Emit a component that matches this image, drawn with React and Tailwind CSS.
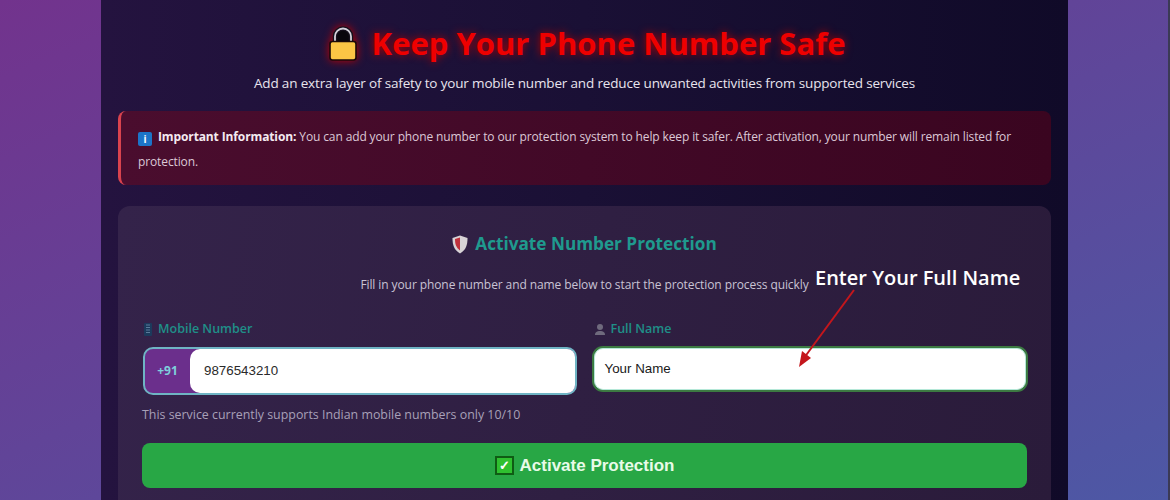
const seg = "font-['Open_Sans','Noto_Sans',sans-serif]";

function Lock() {
  return (
    <svg width="28" height="35" viewBox="0 0 28 35" className="shrink-0 [filter:drop-shadow(0_0_4px_#c00000)]">
      <path d="M6 17V10.500a8 8 0 0 1 16 0V17" fill="#08060c" stroke="#15101c" strokeWidth="4.500" />
      <path d="M6 17V10.500a8 8 0 0 1 16 0V17" fill="none" stroke="#d4d2da" strokeWidth="1.800" />
      <rect x="1" y="15.500" width="26" height="18.500" rx="2.500" fill="#fbc545" stroke="#1a0808" strokeWidth="1.600" />
    </svg>
  );
}

function Shield() {
  return (
    <svg width="16" height="19" viewBox="0 0 16 19" className="shrink-0">
      <path d="M8 .5 15.500 3c0 7-1.500 12-7.500 15.500C2 15 .5 10 .5 3z" fill="#d8d3d6" />
      <path d="M8 2.500 3 4c0 5 1 8.500 5 11.500z" fill="#c0313c" />
    </svg>
  );
}

function Phone() {
  return (
    <svg width="8" height="13" viewBox="0 0 8 13" className="shrink-0">
      <rect width="8" height="13" rx="1" fill="#1c3a5c" />
      <path d="M2 2h4M2 4.500h4M2 7h4M2 9.500h4" stroke="#5b7b9b" strokeWidth="1" />
    </svg>
  );
}

function Person() {
  return (
    <svg width="12" height="13" viewBox="0 0 12 13" className="shrink-0">
      <circle cx="6" cy="4" r="3" fill="#6f6a7d" />
      <path d="M1 12c0-3 2-4 5-4s5 1 5 4z" fill="#6f6a7d" />
    </svg>
  );
}

export default function App() {
  return (
    <div className={`relative h-[500px] w-[1170px] overflow-hidden bg-[linear-gradient(157deg,#72338d_0%,#4d58a5_100%)] ${seg}`}>
      <div className="mx-[101px] h-[500px] w-[967px] bg-[linear-gradient(90deg,#24133f_0%,#1a1035_50%,#100a28_100%)] px-[17px] pt-[22px]">
        <div className="flex h-[42px] items-center justify-center gap-[15px] pl-[5px]">
          <Lock />
          <h1 className="text-[31px] leading-[42px] font-bold text-[#ee0000] [text-shadow:0_0_9px_#b00000]">
            Keep Your Phone Number Safe
          </h1>
        </div>
        <p className="mt-[9px] text-center text-[13.5px] leading-[20px] tracking-[-0.16px] text-[#e8e4ee]">
          Add an extra layer of safety to your mobile number and reduce unwanted activities from supported services
        </p>
        <div className="mt-[18px] h-[74px] rounded-[8px] border-l-[3px] border-[#d9434e] bg-[linear-gradient(90deg,#4a0d2e,#3a0520)] px-[17px] py-[13px] text-[12px] leading-[25px] tracking-[-0.12px] text-[#dcc8d6]">
          <span className="mr-[6px] inline-block h-[14px] w-[14px] rounded-[2px] bg-[#1c74c8] text-center align-[-2px] text-[10px] leading-[14px] font-bold text-white">i</span>
          <strong className="font-bold text-[#f4eaf0]">Important Information:</strong> You can add your phone number to our protection system to help keep it safer. After activation, your number will remain listed for protection.
        </div>
        <div className="mt-[21px] h-[300px] rounded-t-[12px] bg-[linear-gradient(100deg,#34234a,#2a1b3a)] px-[24px] pt-[26px]">
          <div className="flex h-[24px] items-center justify-center gap-[7px]">
            <Shield />
            <h2 className="text-[17.2px] leading-[24px] font-bold text-[#1f9a8e]">Activate Number Protection</h2>
          </div>
          <p className="mt-[19px] text-center text-[12px] leading-[20px] tracking-[-0.09px] text-[#c9c3d4]">
            Fill in your phone number and name below to start the protection process quickly
          </p>
          <div className="mt-[24px] grid grid-cols-2 gap-[16px]">
            <div>
              <label className="flex h-[20px] items-center gap-[6px] pl-[2px] text-[12.5px] font-semibold text-[#1f8f88]">
                <Phone />
                Mobile Number
              </label>
              <div className="mt-[8px] ml-[1px] flex h-[48px] overflow-hidden rounded-[10px] border-2 border-[#6fb4c4] bg-[#6b2f8c]">
                <div className="flex w-[45px] items-center justify-center text-[12px] font-bold text-[#7fd0dc]">+91</div>
                <div className="flex flex-1 items-center rounded-l-[10px] bg-white pl-[14px] font-['Liberation_Sans',sans-serif] text-[13.33px] text-[#2a2a2a]">9876543210</div>
              </div>
            </div>
            <div>
              <label className="flex h-[20px] items-center gap-[5px] pl-[1px] text-[12.5px] font-semibold text-[#1f8f88]">
                <Person />
                Full Name
              </label>
              <div className="mx-[1px] mt-[9px] flex h-[42px] items-center rounded-[9px] border border-[#b5e8d8] bg-white pl-[10px] font-['Liberation_Sans',sans-serif] text-[13.33px] text-[#1a1a1a] shadow-[0_0_0_2px_#3c7a42]">
                Your Name
              </div>
            </div>
          </div>
          <p className="mt-[10px] text-[12.4px] leading-[20px] text-[#a8a0b8]">
            This service currently supports Indian mobile numbers only 10/10
          </p>
          <div className="mt-[18px] flex h-[45px] items-center justify-center gap-[6px] rounded-[8px] bg-[#28a745] font-['Liberation_Sans',sans-serif] text-[17px] font-bold text-[#e8fbe8]">
            <span className="flex h-[19px] w-[19px] items-center justify-center border-2 border-[#0f5c14] bg-[#2fc02f] text-[13px] leading-none text-white">✓</span>
            Activate Protection
          </div>
        </div>
      </div>
      <div className="absolute top-[264px] left-[815px] text-[20px] leading-[28px] font-semibold text-white">Enter Your Full Name</div>
      <svg className="absolute top-[288px] left-[795px]" width="65" height="82" viewBox="0 0 65 82">
        <path d="M59 2 9 70" stroke="#c4161c" strokeWidth="2" />
        <path d="M4 79 7 63 16 70z" fill="#c4161c" />
      </svg>
      <div className="absolute top-0 right-0 h-full w-[2px] bg-[#3b3a55]" />
    </div>
  );
}
